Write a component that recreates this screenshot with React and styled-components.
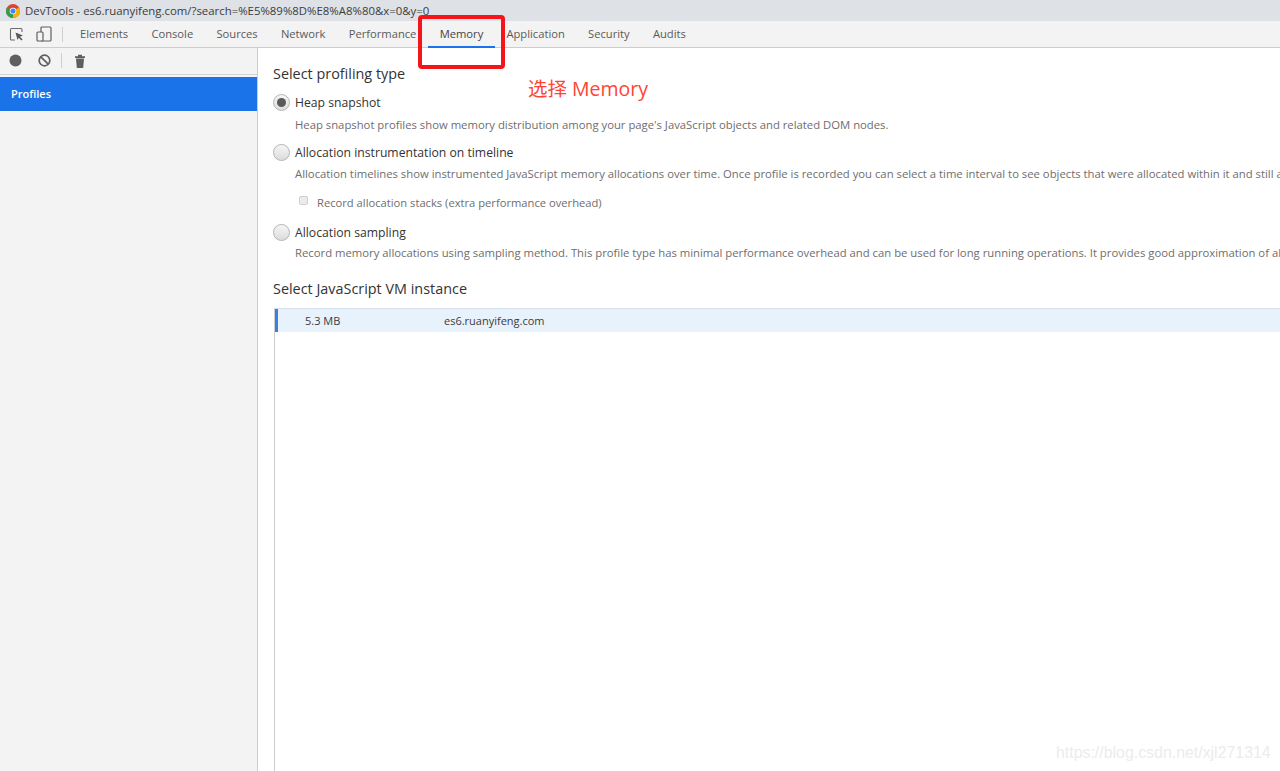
import React from "react";
import styled, { createGlobalStyle } from "styled-components";

const Global = createGlobalStyle`
  html, body { margin: 0; padding: 0; background: #fff; height: 100%; overflow: hidden; }
  body { font-family: "Open Sans", "Noto Sans", sans-serif; color: #333; }
  * { box-sizing: border-box; }
`;

const Page = styled.div`
  position: relative;
  width: 1280px;
  height: 771px;
  overflow: hidden;
  display: flex;
  flex-direction: column;
`;

const TitleBar = styled.div`
  height: 21px;
  flex: none;
  background: #dee1e6;
  display: flex;
  align-items: center;
  gap: 5px;
  padding-left: 6px;
  font-size: 11.4px;
  color: #3c3c3c;
  white-space: nowrap;
`;

const TabBar = styled.div`
  height: 27px;
  flex: none;
  background: #f3f3f3;
  border-bottom: 1px solid #cdcdcd;
  display: flex;
  align-items: stretch;
`;

const ToolIcons = styled.div`
  display: flex;
  align-items: center;
  gap: 12px;
  padding-left: 9px;
  width: 68.4px;
  flex: none;
`;

const Separator = styled.div`
  width: 1px;
  height: 15px;
  background: #d0d0d0;
  flex: none;
  margin: 0 ${(p) => p.$right ?? 0}px 0 ${(p) => p.$left ?? 0}px;
`;

const Tab = styled.div`
  padding: 0 11.62px;
  display: flex;
  align-items: center;
  font-size: 11.2px;
  color: ${(p) => (p.$active ? "#444" : "#5a5a5a")};
  margin-bottom: -1px;
  border-bottom: 2px solid ${(p) => (p.$active ? "#1a73e8" : "transparent")};
  white-space: nowrap;
`;

const Body = styled.div`
  flex: 1;
  display: flex;
  min-height: 0;
`;

const Sidebar = styled.aside`
  width: 258px;
  flex: none;
  background: #f3f3f3;
  border-right: 1px solid #cdcdcd;
  display: flex;
  flex-direction: column;
`;

const SideTools = styled.div`
  height: 27px;
  flex: none;
  background: #f3f3f3;
  border-bottom: 1px solid #d4d4d4;
  display: flex;
  align-items: center;
  gap: 16px;
  padding: 0 0 1px 9px;
`;

const ProfilesItem = styled.div`
  margin-top: 2px;
  height: 34px;
  background: #1a73e8;
  color: #fff;
  font-size: 11px;
  font-weight: 600;
  display: flex;
  align-items: center;
  padding: 0 0 1px 11px;
`;

const Main = styled.main`
  flex: 1;
  min-width: 0;
  background: #fff;
  padding: 16px 0 0 15px;
  overflow: hidden;
  display: flex;
  flex-direction: column;
`;

const Heading = styled.div`
  font-size: 14.4px;
  line-height: 19px;
  margin-top: ${(p) => p.$mt ?? 0}px;
  color: #333;
  white-space: nowrap;
`;

const Option = styled.div`
  display: flex;
  align-items: center;
  gap: 5px;
  height: 18px;
  margin-top: ${(p) => p.$mt}px;
  font-size: 12.2px;
  color: #333;
  white-space: nowrap;
`;

const Radio = styled.span`
  width: 17px;
  height: 17px;
  flex: none;
  border-radius: 50%;
  border: 1px solid #b4b4b4;
  background: linear-gradient(#f6f6f6, #dcdcdc);
  display: flex;
  align-items: center;
  justify-content: center;
  &::after {
    content: "";
    display: ${(p) => (p.$checked ? "block" : "none")};
    width: 9px;
    height: 9px;
    border-radius: 50%;
    background: #5a5a5a;
  }
`;

const Desc = styled.div`
  margin: ${(p) => p.$mt ?? 7}px 0 0 22px;
  font-size: 11.3px;
  line-height: 14px;
  color: #6e6e6e;
  white-space: nowrap;
`;

const CheckRow = styled.div`
  display: flex;
  align-items: center;
  gap: 9px;
  margin: 14px 0 0 26px;
  height: 14px;
  font-size: 11.2px;
  color: #6e6e6e;
  white-space: nowrap;
`;

const Check = styled.span`
  width: 9px;
  height: 9px;
  flex: none;
  border: 1px solid #cfcfcf;
  border-radius: 2px;
  background: #ececec;
  margin-top: -3px;
`;

const InstanceList = styled.div`
  flex: 1;
  margin: 10px 0 0 1px;
  border-left: 1px solid #cdcdcd;
  border-top: 1px solid #d6e0ec;
`;

const InstanceRow = styled.div`
  height: 23px;
  background: #e8f2fd;
  border-left: 3px solid #3b7fe0;
  display: flex;
  align-items: center;
  font-size: 11px;
  color: #3c3c3c;
  white-space: nowrap;
`;

const Size = styled.span`
  width: 166px;
  padding-left: 27px;
  flex: none;
`;

const Highlight = styled.div`
  position: absolute;
  left: 418px;
  top: 15px;
  width: 87px;
  height: 54px;
  border: 4px solid #f5141a;
  border-radius: 4px;
`;

const Note = styled.div`
  position: absolute;
  left: 528px;
  top: 76px;
  font-family: "Open Sans", "Noto Sans CJK SC", sans-serif;
  font-size: 19.5px;
  line-height: 26px;
  color: #ff4433;
  white-space: nowrap;
`;

const Watermark = styled.div`
  position: absolute;
  left: 1056px;
  top: 743px;
  font-family: "Liberation Sans", sans-serif;
  font-size: 15.9px;
  line-height: 20px;
  color: #ececec;
  white-space: nowrap;
`;

const Chrome = () => (
  <svg width="14" height="14" viewBox="0 0 24 24">
    <circle cx="12" cy="12" r="12" fill="#db4437" />
    <path d="M12 12 L1.6 6 A12 12 0 0 0 12 24 Z" fill="#2f9e50" />
    <path d="M12 12 L12 24 A12 12 0 0 0 22.4 6 Z" fill="#f4b400" />
    <circle cx="12" cy="12" r="5.6" fill="#fff" />
    <circle cx="12" cy="12" r="4.4" fill="#4285f4" />
  </svg>
);

const Inspect = () => (
  <svg width="15" height="15" viewBox="0 0 15 15" fill="none">
    <path d="M6 13H2.5a1 1 0 0 1-1-1V2.5a1 1 0 0 1 1-1H12a1 1 0 0 1 1 1V5" stroke="#6a6a6a" strokeWidth="1.1" />
    <path d="M6.5 5.5l7.5 3-3 1.2 2.6 2.8-1.2 1.1-2.6-2.8L8.5 13z" fill="#5a5a5a" />
  </svg>
);

const Device = () => (
  <svg width="16" height="16" viewBox="0 0 16 16" fill="none" stroke="#5f5f5f" strokeWidth="1.2">
    <rect x="5" y="1" width="10" height="14" rx="1" />
    <rect x="1" y="6" width="6" height="9" rx="1" fill="#f3f3f3" />
  </svg>
);

const RecordDot = () => (
  <svg width="13" height="13" viewBox="0 0 13 13">
    <circle cx="6.5" cy="6.5" r="6" fill="#5f5f5f" />
  </svg>
);

const Clear = () => (
  <svg width="13" height="13" viewBox="0 0 13 13" fill="none" stroke="#5f5f5f" strokeWidth="1.7">
    <circle cx="6.5" cy="6.5" r="5.3" />
    <path d="M2.8 2.8l7.4 7.4" />
  </svg>
);

const Trash = () => (
  <svg width="12" height="14" viewBox="0 0 12 14">
    <path d="M1 2.2h10V4H1zM4 .8h4v1.4H4zM2 4.6h8L9.2 14H2.8z" fill="#5f5f5f" />
  </svg>
);

const tabs = [
  ["Elements"],
  ["Console"],
  ["Sources"],
  ["Network"],
  ["Performance"],
  ["Memory", true],
  ["Application"],
  ["Security"],
  ["Audits"],
];

export default function App() {
  return (
    <Page>
      <Global />
      <TitleBar>
        <Chrome />
        DevTools - es6.ruanyifeng.com/?search=%E5%89%8D%E8%A8%80&amp;x=0&amp;y=0
      </TitleBar>
      <TabBar>
        <ToolIcons>
          <Inspect />
          <Device />
          <Separator $left={-2} />
        </ToolIcons>
        {tabs.map(([label, active]) => (
          <Tab key={label} $active={active}>{label}</Tab>
        ))}
      </TabBar>
      <Body>
        <Sidebar>
          <SideTools>
            <RecordDot />
            <Clear />
            <Separator $left={-6} $right={-4} />
            <Trash />
          </SideTools>
          <ProfilesItem>Profiles</ProfilesItem>
        </Sidebar>
        <Main>
          <Heading>Select profiling type</Heading>
          <Option $mt={10}><Radio $checked />Heap snapshot</Option>
          <Desc>Heap snapshot profiles show memory distribution among your page's JavaScript objects and related DOM nodes.</Desc>
          <Option $mt={11}><Radio />Allocation instrumentation on timeline</Option>
          <Desc $mt={6}>Allocation timelines show instrumented JavaScript memory allocations over time. Once profile is recorded you can select a time interval to see objects that were allocated within it and still alive at the end of the recording.</Desc>
          <CheckRow><Check />Record allocation stacks (extra performance overhead)</CheckRow>
          <Option $mt={14}><Radio />Allocation sampling</Option>
          <Desc $mt={5}>Record memory allocations using sampling method. This profile type has minimal performance overhead and can be used for long running operations. It provides good approximation of allocations broken down by JavaScript execution stack.</Desc>
          <Heading $mt={19}>Select JavaScript VM instance</Heading>
          <InstanceList>
            <InstanceRow>
              <Size>5.3 MB</Size>
              es6.ruanyifeng.com
            </InstanceRow>
          </InstanceList>
        </Main>
      </Body>
      <Highlight />
      <Note>选择 Memory</Note>
      <Watermark>https://blog.csdn.net/xjl271314</Watermark>
    </Page>
  );
}
